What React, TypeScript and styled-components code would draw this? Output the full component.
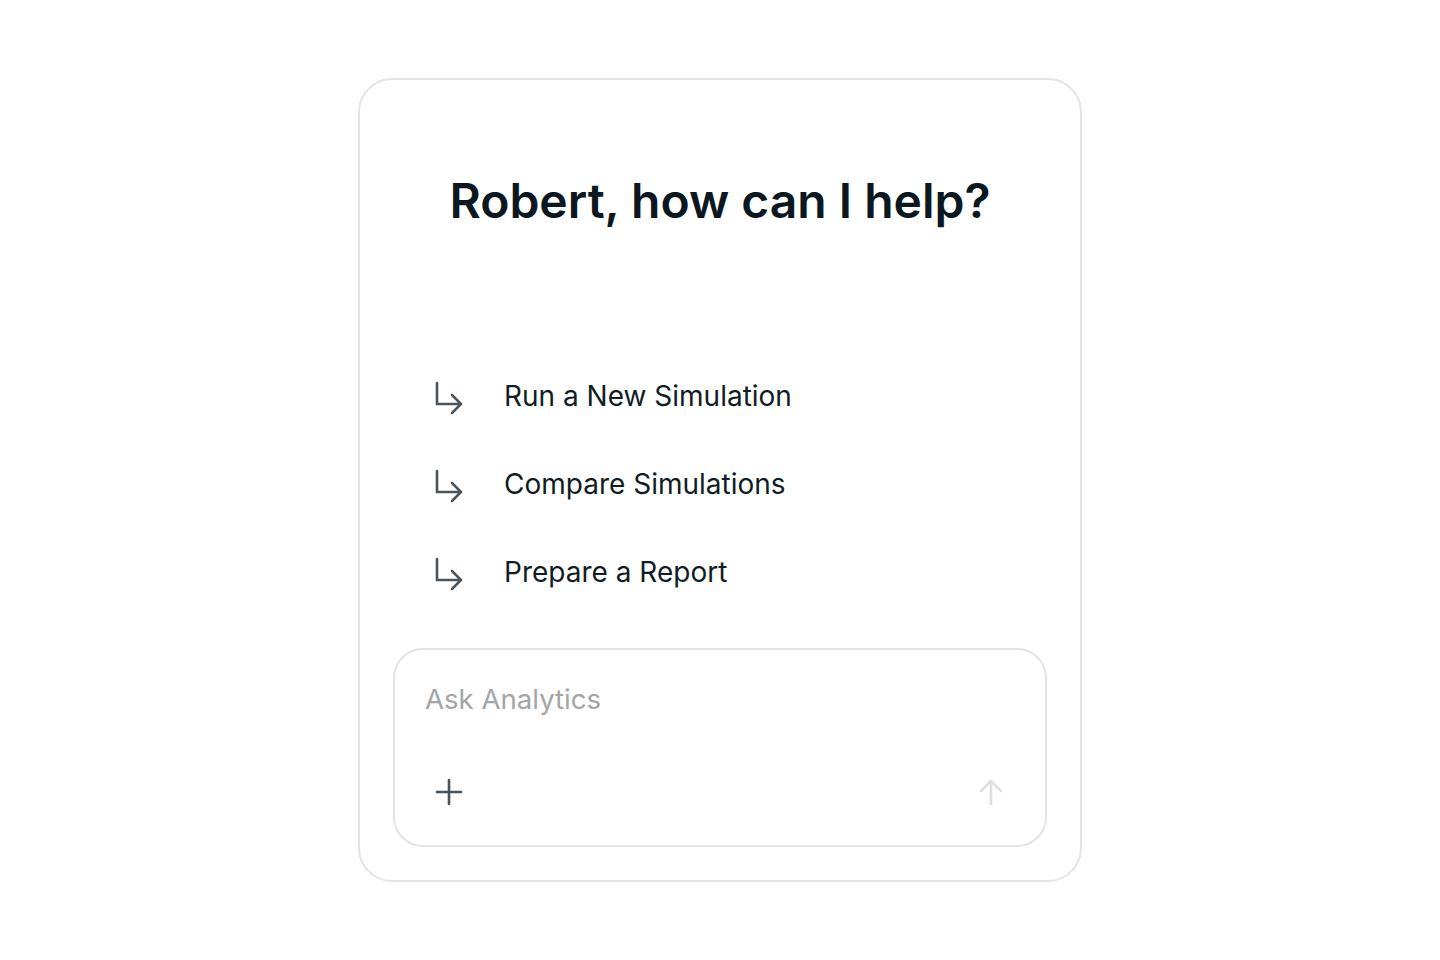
import React from 'react'
import styled, { createGlobalStyle } from 'styled-components'

const GlobalStyle = createGlobalStyle`
  html, body {
    margin: 0;
    padding: 0;
    background: #ffffff;
    font-family: Inter, "Noto Sans", sans-serif;
    -webkit-font-smoothing: antialiased;
  }
`

const suggestions = ['Run a New Simulation', 'Compare Simulations', 'Prepare a Report']

const ReturnArrow = () => (
  <svg width="32" height="36" viewBox="0 0 32 36" fill="none">
    <path
      d="M5 3V24H29M20 15L29 24L20 33"
      stroke="#4b555c"
      strokeWidth="2.6"
      strokeLinecap="round"
      strokeLinejoin="miter"
    />
  </svg>
)

const PlusIcon = () => (
  <svg width="28" height="28" viewBox="0 0 28 28" fill="none">
    <path d="M14 2V26M2 14H26" stroke="#48525a" strokeWidth="2.6" strokeLinecap="round" />
  </svg>
)

const ArrowUpIcon = () => (
  <svg width="28" height="28" viewBox="0 0 28 28" fill="none">
    <path
      d="M14 26V3M4 13L14 3L24 13"
      stroke="#dedfe0"
      strokeWidth="2.6"
      strokeLinecap="round"
      strokeLinejoin="round"
    />
  </svg>
)

const App = () => {
  return (
    <>
      <GlobalStyle />
      <StyledPage>
        <StyledCard>
          <StyledTitle>Robert, how can I help?</StyledTitle>
          <StyledList>
            {suggestions.map((label) => (
              <StyledSuggestion key={label}>
                <StyledIcon>
                  <ReturnArrow />
                </StyledIcon>
                {label}
              </StyledSuggestion>
            ))}
          </StyledList>
          <StyledComposer>
            <StyledInput placeholder="Ask Analytics" />
            <StyledToolbar>
              <StyledIconButton aria-label="Add">
                <PlusIcon />
              </StyledIconButton>
              <StyledIconButton aria-label="Send" disabled>
                <ArrowUpIcon />
              </StyledIconButton>
            </StyledToolbar>
          </StyledComposer>
        </StyledCard>
      </StyledPage>
    </>
  )
}

const StyledPage = styled.div`
  min-height: 960px;
  display: flex;
  justify-content: center;
  padding-top: 78px;
  box-sizing: border-box;
`

const StyledCard = styled.div`
  width: 724px;
  height: 804px;
  box-sizing: border-box;
  border: 2px solid #e2e4e6;
  border-radius: 34px;
  padding: 92px 33px 33px;
  display: flex;
  flex-direction: column;
`

const StyledTitle = styled.h1`
  margin: 0;
  text-align: center;
  font-size: 48px;
  line-height: 58px;
  font-weight: 600;
  color: #0b1821;
`

const StyledList = styled.ul`
  list-style: none;
  margin: 122px 0 0;
  padding: 0 0 0 39px;
  display: flex;
  flex-direction: column;
`

const StyledSuggestion = styled.li`
  height: 88px;
  display: flex;
  align-items: center;
  gap: 40px;
  font-size: 28px;
  color: #111c24;
  cursor: pointer;
`

const StyledIcon = styled.span`
  display: flex;
  width: 32px;
  margin-top: 4px;
`

const StyledComposer = styled.div`
  margin-top: 32px;
  flex: 1;
  border: 2px solid #e2e4e6;
  border-radius: 30px;
  padding: 31px 40px 39px 30px;
  display: flex;
  flex-direction: column;
  justify-content: space-between;
`

const StyledInput = styled.input`
  border: none;
  outline: none;
  padding: 0;
  font-family: inherit;
  font-size: 27.6px;
  line-height: 36px;
  color: #111c24;
  background: transparent;

  &::placeholder {
    color: #a3a5a7;
  }
`

const StyledToolbar = styled.div`
  display: flex;
  justify-content: space-between;
  align-items: center;
  padding-left: 10px;
`

const StyledIconButton = styled.button`
  border: none;
  background: none;
  padding: 0;
  display: flex;
  cursor: pointer;

  &:disabled {
    cursor: default;
  }
`

export default App
